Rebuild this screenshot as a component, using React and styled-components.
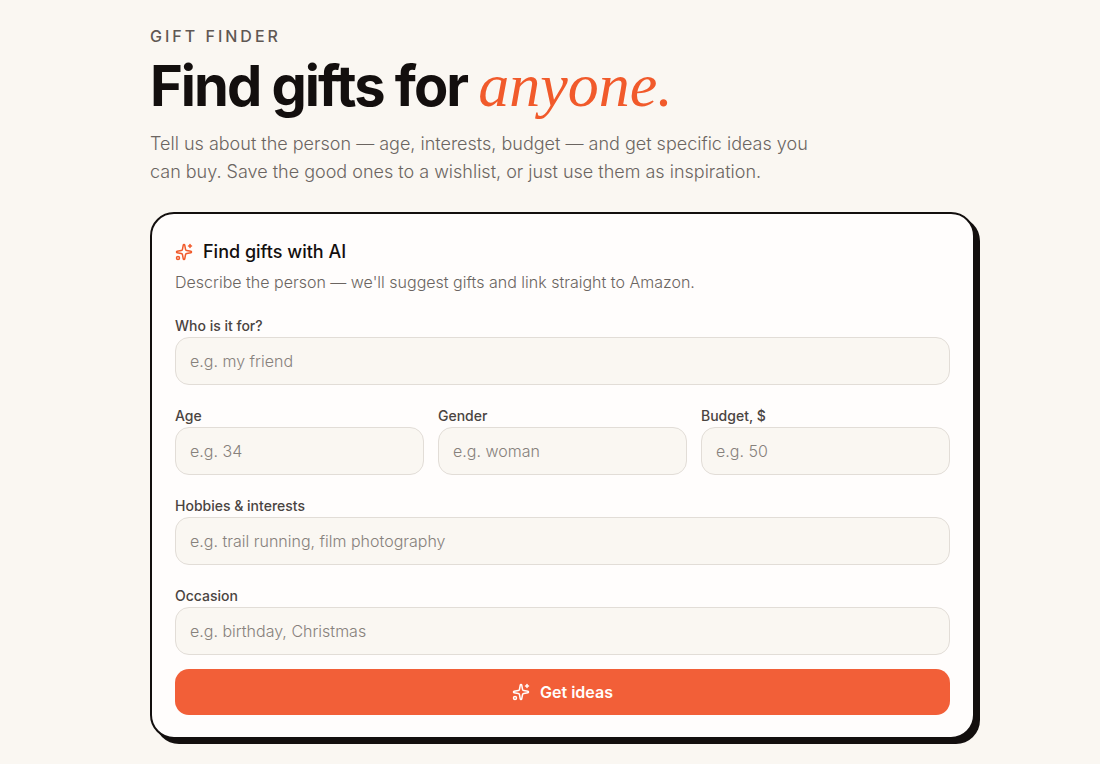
import React, { useState } from "react";
import styled, { createGlobalStyle } from "styled-components";
import { Sparkles } from "lucide-react";

const emptyForm = {
  who: "",
  age: "",
  gender: "",
  budget: "",
  hobbies: "",
  occasion: "",
};

function App() {
  const [form, setForm] = useState(emptyForm);

  const onChange = (e) => {
    setForm({ ...form, [e.target.name]: e.target.value });
  };

  const renderField = (name, label, placeholder) => (
    <Field>
      <Label htmlFor={name}>{label}</Label>
      <Input
        id={name}
        name={name}
        placeholder={placeholder}
        value={form[name]}
        onChange={onChange}
      />
    </Field>
  );

  return (
    <>
      <GlobalStyle />
      <Page>
        <Eyebrow>GIFT FINDER</Eyebrow>
        <Title>
          Find gifts for <em>anyone.</em>
        </Title>
        <Intro>
          Tell us about the person — age, interests, budget — and get specific
          ideas you can buy. Save the good ones to a wishlist, or just use them
          as inspiration.
        </Intro>
        <Card onSubmit={(e) => e.preventDefault()}>
          <CardTitle>
            <Sparkles size={18} color="#f15a2b" />
            Find gifts with AI
          </CardTitle>
          <CardText>
            Describe the person — we'll suggest gifts and link straight to
            Amazon.
          </CardText>
          <Fields>
            {renderField("who", "Who is it for?", "e.g. my friend")}
            <Row>
              {renderField("age", "Age", "e.g. 34")}
              {renderField("gender", "Gender", "e.g. woman")}
              {renderField("budget", "Budget, $", "e.g. 50")}
            </Row>
            {renderField(
              "hobbies",
              "Hobbies & interests",
              "e.g. trail running, film photography"
            )}
            {renderField("occasion", "Occasion", "e.g. birthday, Christmas")}
          </Fields>
          <Submit type="submit">
            <Sparkles size={18} />
            Get ideas
          </Submit>
        </Card>
      </Page>
    </>
  );
}

const GlobalStyle = createGlobalStyle`
  * {
    box-sizing: border-box;
  }

  body {
    margin: 0;
    background-color: #faf7f2;
    color: #130f0e;
    font-family: Inter, "Open Sans", sans-serif;
  }
`;

const Page = styled.main`
  padding: 26px 125px 20px 150px;
`;

const Eyebrow = styled.p`
  margin: 0;
  color: #5f5854;
  font-size: 16px;
  font-weight: 500;
  line-height: 20px;
  letter-spacing: 3px;
`;

const Title = styled.h1`
  margin: 6px 0 10px;
  font-size: 56px;
  font-weight: 700;
  line-height: 68px;
  letter-spacing: -2px;

  > em {
    color: #f15a2b;
    font-family: "Liberation Serif", serif;
    font-size: 62px;
    font-weight: 400;
    line-height: 60px;
    letter-spacing: 0;
  }
`;

const Intro = styled.p`
  max-width: 670px;
  margin: 0 0 26px;
  color: #6b6561;
  font-size: 18px;
  font-weight: 300;
  line-height: 28px;
`;

const Card = styled.form`
  padding: 24px 23px 22px;
  background-color: #fffdfc;
  border: 2px solid #130f0e;
  border-radius: 24px;
  box-shadow: 5px 5px 0 #130f0e;
`;

const CardTitle = styled.h2`
  display: flex;
  align-items: center;
  gap: 10px;
  margin: 0;
  font-size: 18px;
  font-weight: 500;
  line-height: 28px;
`;

const CardText = styled.p`
  margin: 4px 0 23px;
  color: #6b6561;
  font-size: 16px;
  font-weight: 300;
  line-height: 24px;
`;

const Fields = styled.div`
  display: grid;
  gap: 22px;
`;

const Row = styled.div`
  display: grid;
  grid-template-columns: repeat(3, 1fr);
  gap: 14px;
`;

const Field = styled.div`
  display: flex;
  flex-direction: column;
  gap: 2px;
  min-width: 0;
`;

const Label = styled.label`
  color: #4a4441;
  font-size: 14px;
  font-weight: 500;
  line-height: 18px;
`;

const Input = styled.input`
  width: 100%;
  height: 48px;
  padding: 0 14px;
  background-color: #faf7f2;
  border: 1px solid #e2ddd7;
  border-radius: 14px;
  color: #130f0e;
  font-family: inherit;
  font-size: 16px;
  font-weight: 300;

  &::placeholder {
    color: #87817c;
    opacity: 1;
  }

  &:focus {
    outline: none;
    border-color: #f15a2b;
  }
`;

const Submit = styled.button`
  display: flex;
  align-items: center;
  justify-content: center;
  gap: 10px;
  width: 100%;
  height: 46px;
  margin-top: 14px;
  background-color: #f25f38;
  border: none;
  border-radius: 14px;
  color: #fffdfc;
  font-family: inherit;
  font-size: 16px;
  font-weight: 600;
  cursor: pointer;
`;

export default App;
